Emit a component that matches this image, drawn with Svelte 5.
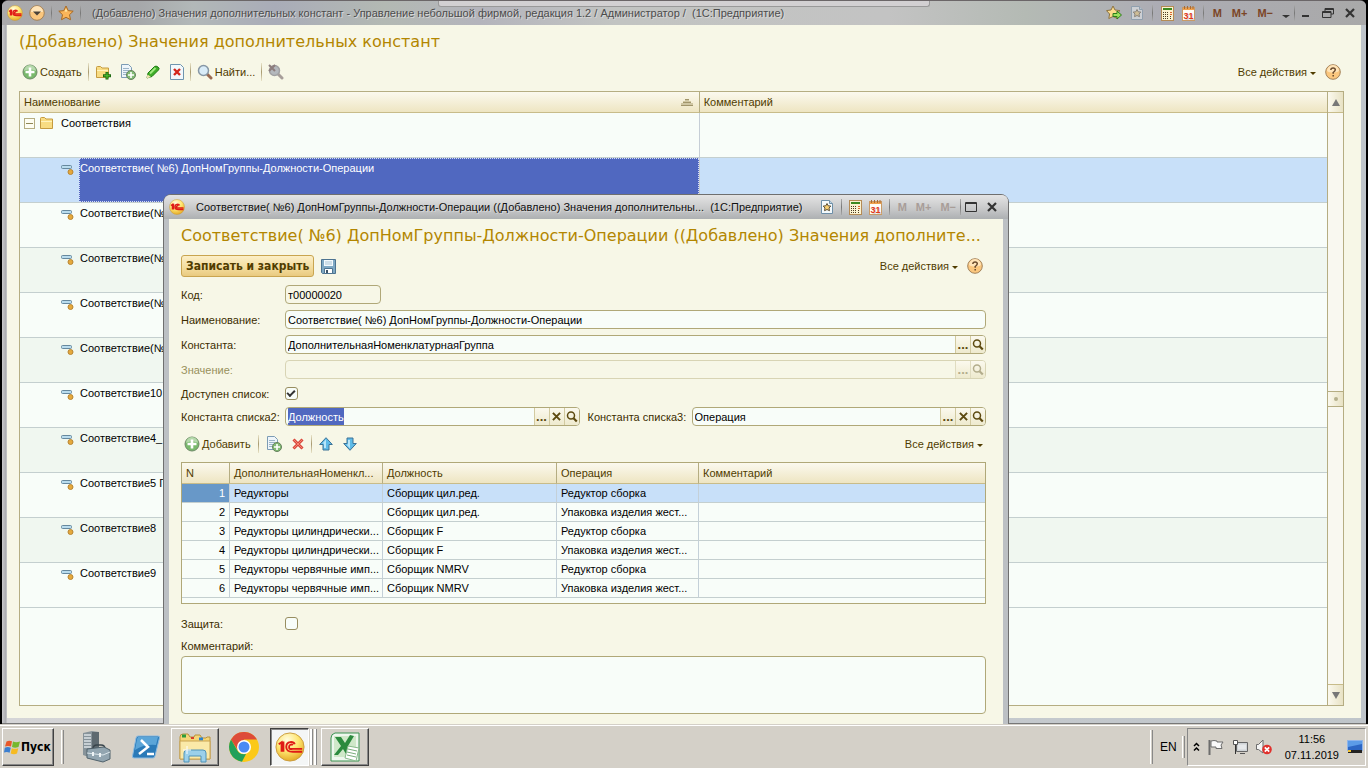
<script lang="ts">
  import { onMount } from "svelte";

  const constants = [
    { name: "Соответствие( №6) ДопНомГруппы-Должности-Операции", selected: true },
    { name: "Соответствие(№" },
    { name: "Соответствие(№" },
    { name: "Соответствие(№" },
    { name: "Соответствие(№" },
    { name: "Соответствие10" },
    { name: "Соответствие4_" },
    { name: "Соответствие5 Г" },
    { name: "Соответствие8" },
    { name: "Соответствие9" },
  ];

  const rows = [
    { group: "Редукторы", post: "Сборщик цил.ред.", op: "Редуктор сборка" },
    { group: "Редукторы", post: "Сборщик цил.ред.", op: "Упаковка изделия жест..." },
    { group: "Редукторы цилиндрически...", post: "Сборщик F", op: "Редуктор сборка" },
    { group: "Редукторы цилиндрически...", post: "Сборщик F", op: "Упаковка изделия жест..." },
    { group: "Редукторы червячные имп...", post: "Сборщик NMRV", op: "Редуктор сборка" },
    { group: "Редукторы червячные имп...", post: "Сборщик NMRV", op: "Упаковка изделия жест..." },
  ];

  let current = $state(0);
  let available = $state(true);
  let locked = $state(false);
  let list2: HTMLInputElement;

  onMount(() => {
    list2.focus();
    list2.select();
  });
</script>

{#snippet logo(size: number)}
  <svg width={size} height={size} viewBox="0 0 32 32">
    <defs>
      <radialGradient id="gold" cx="40%" cy="25%" r="80%">
        <stop offset="0" stop-color="#fffce0" />
        <stop offset="0.5" stop-color="#ffe671" />
        <stop offset="1" stop-color="#e2a51e" />
      </radialGradient>
    </defs>
    <circle cx="16" cy="16" r="15" fill="url(#gold)" stroke="#c99a3c" />
    <g fill="none" stroke="#df1b16" stroke-width={size < 20 ? 3 : 2}>
      <path d="M4 13l3-2v10M7 11h2v10" />
      <path d="M21 13c-1-3-9-4-9 3 0 5 4 5 7 5h10" />
      <path d="M19 14c-1-1-4-1-4 2s2 2 4 2h10" />
    </g>
  </svg>
{/snippet}

{#snippet star(size: number)}
  <svg width={size} height={size} viewBox="0 0 16 16">
    <path d="M8 1l2.200 4.600 5 .6-3.700 3.500 1 5L8 12.300 3.500 14.700l1-5L.8 6.200l5-.6z" fill="#fbb55a" stroke="#a86a24" />
    <path d="M8 3.500l1.300 3H6.700z" fill="#fff0b0" />
  </svg>
{/snippet}

{#snippet starGo()}
  <svg width="16" height="16" viewBox="0 0 16 16">
    <path d="M7 1l2 4 5 .6-3.500 3.400 1 4.500L7 11.500 2.800 13.500l.8-4.500L.5 5.600 5 5z" fill="#fcdc8c" stroke="#8d7441" />
    <path d="M7 8.500h4V6l4.500 4-4.500 4v-2.500H7z" fill="#9be25c" stroke="#2d7b1b" />
  </svg>
{/snippet}

{#snippet starPage(dim: boolean)}
  <svg width="14" height="14" viewBox="0 0 14 14" opacity={dim ? 0.45 : 1}>
    <path d="M1.500.5h8l3 3v10h-11z" fill="#f3f9fc" stroke="#6d8fa8" />
    <path d="M9.500.5v3h3" fill="#c4d7e4" stroke="#6d8fa8" />
    <path d="M7 3.500l1.200 2.300 2.600.3L9 8l.5 2.700L7 9.500l-2.500 1.200L5 8 3.200 6.100l2.600-.3z" fill="#f7cf73" stroke="#5d5038" />
  </svg>
{/snippet}

{#snippet calc()}
  <svg width="13" height="15" viewBox="0 0 13 15">
    <rect x="0.500" y="0.500" width="12" height="14" fill="#fbf2d0" stroke="#b58b55" />
    <path d="M2 3h9" stroke="#3c8a20" stroke-width="2" />
    <path d="M2 6.500h6M2 8.500h6M2 10.500h6M2 12.500h6" stroke="#4a3a20" stroke-dasharray="1 1" />
    <path d="M9 6.500h2M9 8.500h2" stroke="#e0662c" />
    <path d="M9 10.500h2M9 12.500h2" stroke="#4a3a20" stroke-dasharray="1 1" />
  </svg>
{/snippet}

{#snippet calendar()}
  <svg width="13" height="15" viewBox="0 0 13 15">
    <rect x="0.500" y="1.500" width="12" height="13" fill="#fffdf6" stroke="#c99a66" />
    <path d="M1 2h11v2H1z" fill="#f0a14c" />
    <path d="M2.500 0v3M5.500 0v3M8.500 0v3M11 0v3" stroke="#a86a34" />
    <text x="6.500" y="13" text-anchor="middle" font-size="9" font-weight="700" fill="#e2391b">31</text>
  </svg>
{/snippet}

{#snippet plus()}
  <svg width="16" height="16" viewBox="0 0 16 16">
    <circle cx="8" cy="8" r="7" fill="#79b96c" stroke="#6f8a69" />
    <path d="M2 7a6 6 0 0 1 12 0c-3-2-9-2-12 0z" fill="#b5d9ab" />
    <path d="M8 3.500v9M3.500 8h9" stroke="#fff" stroke-width="2.600" />
  </svg>
{/snippet}

{#snippet folder(add: boolean)}
  <svg width="16" height="16" viewBox="0 0 16 16">
    <path d="M1.500 3.500q0-1 1-1h3l1.500 1.500h6.500v9.500h-12z" fill="#f8dc82" stroke="#c59b3f" />
    <path d="M2 6h11v1H2z" fill="#fff3bd" />
    {#if add}
      <path d="M12 8v7.500M8 11.800h8" stroke="#1d6a10" stroke-width="3" />
      <path d="M12 8.700v6M9 11.800h6" stroke="#54c832" />
    {/if}
  </svg>
{/snippet}

{#snippet copy()}
  <svg width="16" height="16" viewBox="0 0 16 16">
    <path d="M1.500.5h7l3 3v10h-10z" fill="#eef5fa" stroke="#7c9cb5" />
    <path d="M3 4.500h6M3 6.500h6M3 8.500h5M3 10.500h4" stroke="#9bb4c8" />
    <circle cx="11" cy="11" r="4.500" fill="#82bb74" stroke="#66805f" />
    <path d="M11 8v6M8 11h6" stroke="#fff" stroke-width="1.600" />
  </svg>
{/snippet}

{#snippet pencil()}
  <svg width="16" height="14" viewBox="0 0 16 14">
    <path d="M2 13l1-5 6.500-6.500q1.500-1 3.500.5t.5 3L7 11.500z" fill="#3fae28" stroke="#1d7a12" />
    <path d="M5 8.500l5.500-5.500" stroke="#a0ea80" stroke-width="2" />
    <path d="M1.500 13.500l1-4L6 12z" fill="#f3e3b5" />
  </svg>
{/snippet}

{#snippet deletePage()}
  <svg width="14" height="16" viewBox="0 0 14 16">
    <path d="M.5.500h10l3 3v12H.5z" fill="#f2f8fc" stroke="#6f94ae" />
    <path d="M4 5l6 6M10 5l-6 6" stroke="#d3261c" stroke-width="2.400" />
  </svg>
{/snippet}

{#snippet glass(off: boolean)}
  <svg width="16" height="16" viewBox="0 0 16 16">
    <path d="M10 10l4 4" stroke={off ? "#a79e9a" : "#9a6a52"} stroke-width="3" stroke-linecap="round" />
    <circle cx="6.500" cy="6.500" r="5" fill={off ? "#b4b8bd" : "#d9ecf8"} stroke={off ? "#a1a1a3" : "#8797a5"} stroke-width="1.500" />
    {#if off}
      <path d="M1 1l6 6M7 1L1 7" stroke="#8d7d7d" stroke-width="2" />
    {/if}
  </svg>
{/snippet}

{#snippet help()}
  <svg width="16" height="16" viewBox="0 0 16 16">
    <circle cx="8" cy="8" r="7.300" fill="#fbc77e" stroke="#a3825a" />
    <path d="M2 7a6 6 0 0 1 12 0c-3 2-9 2-12 0z" fill="#ffe4b8" />
    <path d="M5.800 6q.2-2 2.300-2t2.200 1.800Q10.300 7 8.200 8.500v1.200M8.200 11v1.500" fill="none" stroke="#6a4a2c" stroke-width="1.500" />
  </svg>
{/snippet}

{#snippet lens()}
  <svg width="12" height="12" viewBox="0 0 12 12">
    <circle cx="5" cy="4.500" r="3.500" fill="none" stroke="currentColor" stroke-width="1.500" />
    <path d="M7.500 7.200l3.300 3.300" stroke="currentColor" stroke-width="2.200" />
  </svg>
{/snippet}

{#snippet cross(size: number)}
  <svg width={size} height={size} viewBox="0 0 10 10">
    <path d="M1 1l8 8M9 1L1 9" stroke="currentColor" stroke-width="2.200" />
  </svg>
{/snippet}

{#snippet arrow(flip: boolean)}
  <svg class:flip width="14" height="14" viewBox="0 0 14 14">
    <path d="M7 .7l6.300 6.800H10V13H4V7.500H.7z" fill="#5ebbe8" stroke="#3c7296" />
    <path d="M7 2.500L3.500 6.500H5V11h2z" fill="#b9e6fa" />
  </svg>
{/snippet}

{#snippet item()}
  <svg width="14" height="12" viewBox="0 0 14 12">
    <rect x="0.500" y="1.500" width="10" height="3" rx="1" fill="#b9dcee" stroke="#66889e" />
    <circle cx="9.500" cy="8" r="2.500" fill="#e5a93c" stroke="#b98634" />
  </svg>
{/snippet}

{#snippet allActions()}
  <button class="flat">Все действия<i class="caret"></i></button>
{/snippet}

{#snippet memory(dim: boolean)}
  <button class="mem" class:dim>M</button>
  <button class="mem" class:dim>M+</button>
  <button class="mem" class:dim>M−</button>
{/snippet}

<div class="desktop">
  <main class="window">
    <header class="titlebar">
      <i class="remote"></i>
      {@render logo(16)}
      <svg class="menu" width="16" height="16" viewBox="0 0 16 16">
        <circle cx="8" cy="8" r="7.300" fill="#fbc77e" stroke="#a3825a" />
        <path d="M2 7a6 6 0 0 1 12 0z" fill="#ffe4b8" />
        <path d="M4 6.500h8L8 10.500z" fill="#4a4238" />
      </svg>
      <i class="sep"></i>
      {@render star(16)}
      <i class="sep"></i>
      <span class="caption">(Добавлено) Значения дополнительных констант - Управление небольшой фирмой, редакция 1.2 / Администратор /&nbsp; (1С:Предприятие)</span>
      <div class="tools">
        {@render starGo()}
        {@render starPage(true)}
        <i class="sep"></i>
        {@render calc()}
        {@render calendar()}
        <i class="sep"></i>
        {@render memory(false)}
        <svg width="8" height="16" viewBox="0 0 8 16"><path d="M0 10h8l-4 3z" fill="#333" /></svg>
        <i class="sep tight"></i>
        <button class="sys" aria-label="Свернуть"><svg width="12" height="12" viewBox="0 0 12 12"><path d="M2 9h7" stroke="#333" stroke-width="2" /></svg></button>
        <button class="sys" aria-label="Восстановить"><svg width="12" height="12" viewBox="0 0 12 12"><path d="M3 4V1.500h8.500V7H9M.5 4.500H9v6H.5zM.5 5.500H9M3 2.500h8" fill="none" stroke="#333" /></svg></button>
        <button class="sys" aria-label="Закрыть">{@render cross(10)}</button>
      </div>
    </header>

    <div class="body">
      <h1>(Добавлено) Значения дополнительных констант</h1>
      <div class="toolbar">
        <button class="flat">{@render plus()}Создать</button>
        <i class="split"></i>
        <button class="flat" aria-label="Создать группу">{@render folder(true)}</button>
        <button class="flat" aria-label="Скопировать">{@render copy()}</button>
        <button class="flat" aria-label="Изменить">{@render pencil()}</button>
        <button class="flat" aria-label="Пометить на удаление">{@render deletePage()}</button>
        <i class="split"></i>
        <button class="flat">{@render glass(false)}Найти...</button>
        <i class="split"></i>
        <button class="flat" aria-label="Отменить поиск">{@render glass(true)}</button>
        <div class="right">
          {@render allActions()}
          <button class="flat" aria-label="Справка">{@render help()}</button>
        </div>
      </div>

      <div class="list">
        <table class="tree">
          <colgroup><col class="wide" /><col /></colgroup>
          <thead>
            <tr>
              <th>
                <div class="sorted">
                  Наименование
                  <svg width="12" height="8" viewBox="0 0 12 8"><path d="M4 1h4v2h2v2h2v3H0V5h2V3h2z" fill="#cfc6a2" /><path d="M4 1.500h4M2 4.500h8M0 7.500h12" stroke="#a1956a" /></svg>
                </div>
              </th>
              <th>Комментарий</th>
            </tr>
          </thead>
          <tbody>
            <tr>
              <td>
                <div class="node root">
                  <svg width="11" height="11" viewBox="0 0 11 11"><rect x="0.500" y="0.500" width="10" height="10" fill="#fdfdf2" stroke="#b5ad82" /><path d="M2 5.500h7" stroke="#8f8757" /></svg>
                  {@render folder(false)}
                  <span>Соответствия</span>
                </div>
              </td>
              <td></td>
            </tr>
            {#each constants as c, i (i)}
              <tr class:selected={c.selected}>
                <td>
                  <div class="node">
                    <span class="mark">{@render item()}</span>
                    <span class="name">{c.name}</span>
                  </div>
                </td>
                <td></td>
              </tr>
            {/each}
          </tbody>
        </table>
        <div class="scroll">
          <i class="btn up"></i>
          <i class="thumb"></i>
          <i class="btn down"></i>
        </div>
      </div>
    </div>
  </main>

  <section class="dialog">
    <header class="titlebar light">
      {@render logo(16)}
      <span class="caption">Соответствие( №6) ДопНомГруппы-Должности-Операции ((Добавлено) Значения дополнительны...&nbsp; (1С:Предприятие)</span>
      <div class="tools">
        {@render starPage(false)}
        <i class="sep"></i>
        {@render calc()}
        {@render calendar()}
        <i class="sep"></i>
        {@render memory(true)}
        <i class="sep tight"></i>
        <button class="sys" aria-label="Развернуть"><svg width="12" height="12" viewBox="0 0 12 12"><path d="M.5 1.500h11v9H.5zM.5 2.500h11" fill="none" stroke="#333" /></svg></button>
        <button class="sys" aria-label="Закрыть">{@render cross(10)}</button>
      </div>
    </header>

    <form class="form" onsubmit={(e) => e.preventDefault()}>
      <h1>Соответствие( №6) ДопНомГруппы-Должности-Операции ((Добавлено) Значения дополните...</h1>
      <div class="commands">
        <button class="primary">Записать и закрыть</button>
        <button class="flat" aria-label="Записать">
          <svg width="15" height="15" viewBox="0 0 15 15">
            <path d="M.5.500h14v14h-13l-1-1z" fill="#7fa9c4" stroke="#4d7390" />
            <path d="M3 1h9v6H3z" fill="#f4fafd" />
            <path d="M4 3h7M4 5h7" stroke="#a9c4d4" />
            <path d="M3.500 9.500h8v5h-8z" fill="#fff" stroke="#4d7390" />
            <path d="M5 11h2v3H5z" fill="#3d5568" />
          </svg>
        </button>
        <div class="right">
          {@render allActions()}
          <button class="flat" aria-label="Справка">{@render help()}</button>
        </div>
      </div>

      <div class="row">
        <label for="code">Код:</label>
        <div class="field short"><input id="code" value="т00000020" readonly /></div>
      </div>
      <div class="row">
        <label for="name">Наименование:</label>
        <div class="field"><input id="name" value="Соответствие( №6) ДопНомГруппы-Должности-Операции" /></div>
      </div>
      <div class="row">
        <label for="const">Константа:</label>
        <div class="field">
          <input id="const" value="ДополнительнаяНоменклатурнаяГруппа" />
          <button class="pick">...</button>
          <button class="pick" aria-label="Открыть">{@render lens()}</button>
        </div>
      </div>
      <div class="row off">
        <label for="value">Значение:</label>
        <div class="field">
          <input id="value" disabled />
          <button class="pick" disabled>...</button>
          <button class="pick" disabled aria-label="Открыть">{@render lens()}</button>
        </div>
      </div>
      <div class="row low">
        <label for="avail">Доступен список:</label>
        <input type="checkbox" id="avail" bind:checked={available} />
      </div>
      <div class="row low">
        <label for="list2">Константа списка2:</label>
        <div class="field">
          <input id="list2" value="Должность" bind:this={list2} />
          <button class="pick">...</button>
          <button class="pick" aria-label="Очистить">{@render cross(9)}</button>
          <button class="pick" aria-label="Открыть">{@render lens()}</button>
        </div>
        <label class="second" for="list3">Константа списка3:</label>
        <div class="field">
          <input id="list3" value="Операция" />
          <button class="pick">...</button>
          <button class="pick" aria-label="Очистить">{@render cross(9)}</button>
          <button class="pick" aria-label="Открыть">{@render lens()}</button>
        </div>
      </div>

      <div class="toolbar inner">
        <button class="flat">{@render plus()}Добавить</button>
        <i class="split"></i>
        <button class="flat" aria-label="Скопировать">{@render copy()}</button>
        <button class="flat" aria-label="Удалить">
          <svg width="12" height="12" viewBox="0 0 12 12">
            <path d="M1.500 1.500l9 9M10.500 1.500l-9 9" stroke="#d8473c" stroke-width="3" />
            <path d="M1.500 1.500l9 9M10.500 1.500l-9 9" stroke="#f5836f" />
          </svg>
        </button>
        <i class="split"></i>
        <button class="flat" aria-label="Вверх">{@render arrow(false)}</button>
        <button class="flat" aria-label="Вниз">{@render arrow(true)}</button>
        <div class="right">{@render allActions()}</div>
      </div>

      <div class="grid">
        <table>
          <colgroup><col class="n" /><col class="group" /><col class="post" /><col class="op" /><col /></colgroup>
          <thead>
            <tr><th>N</th><th>ДополнительнаяНоменкл...</th><th>Должность</th><th>Операция</th><th>Комментарий</th></tr>
          </thead>
          <tbody>
            {#each rows as r, i (i)}
              <tr class:current={current === i} onclick={() => (current = i)}>
                <td>{i + 1}</td>
                <td>{r.group}</td>
                <td>{r.post}</td>
                <td>{r.op}</td>
                <td></td>
              </tr>
            {/each}
          </tbody>
        </table>
      </div>

      <div class="row">
        <label for="locked">Защита:</label>
        <input type="checkbox" id="locked" bind:checked={locked} />
      </div>
      <label class="above" for="comment">Комментарий:</label>
      <textarea id="comment"></textarea>
    </form>
  </section>
</div>

<footer class="taskbar">
  <button class="task start">
    <svg width="17" height="16" viewBox="0 0 17 16">
      <path d="M2.500 2.500Q5 1 8 2.200L7 7.500Q4 6.300 1 7.500z" fill="#e8582a" />
      <path d="M9 2.500q3 1.500 7 0L14.500 8q-3.500 1.500-6.500 0z" fill="#76b82e" />
      <path d="M.8 8.700q3-1.300 6 0l-1.200 5Q3 12.500 0 13.500z" fill="#3c7fd0" />
      <path d="M7.800 9.200q3 1.300 6.500 0L13 14.500q-3 1.300-6.300 0z" fill="#f6bb22" />
    </svg>
    Пуск
  </button>
  <i class="grip"></i>
  <button class="quick" aria-label="Диспетчер сервера">
    <svg width="30" height="32" viewBox="0 0 30 32">
      <path d="M2 2l9-2 7 1v24l-8 2-8-3z" fill="#87939a" />
      <path d="M11 1l7 0v24l-7 2z" fill="#5d6970" />
      <path d="M3 4h7M3 7h7M3 10h7M3 13h7M3 16h7" stroke="#dde4e8" stroke-width="1.500" />
      <path d="M12 18q0-4 4-4h4q4 0 4 4" fill="none" stroke="#39444b" stroke-width="1.500" />
      <path d="M6 18l17-2 6 3v9l-7 3-16-4z" fill="#92a5b0" stroke="#51626c" />
      <path d="M6 22l16 2 7-3" fill="none" stroke="#dbe5ea" />
      <path d="M12 21v4M19 22v4" stroke="#eef3f5" stroke-width="2" />
    </svg>
  </button>
  <button class="quick" aria-label="PowerShell">
    <svg width="28" height="24" viewBox="0 0 28 24">
      <path d="M6 1h20q2 0 1.500 2L23 21q-.5 2-2 2H2q-2 0-1.500-2L4 3q.5-2 2-2z" fill="#2a7ab8" stroke="#8dbbe0" />
      <path d="M6 2h20l-2 8Q12 9 3 15L5 4z" fill="#5ba5d8" />
      <path d="M9 5l7 7-9 7M15 19h7" fill="none" stroke="#fff" stroke-width="2.500" />
    </svg>
  </button>
  <button class="task" aria-label="Проводник">
    <svg width="34" height="32" viewBox="0 0 34 32">
      <path d="M2 6q0-3 3-3h5l2 3h4l1-2h5l2 3h4l1-1h3v22H2z" fill="#f4d678" stroke="#b8923c" />
      <path d="M4 5h4" stroke="#2a9c3c" stroke-width="3" />
      <path d="M13 7h3" stroke="#d8402c" stroke-width="2" />
      <path d="M21 8h4" stroke="#2b82d0" stroke-width="3" />
      <path d="M2 10h30v18H2z" fill="#fae9a8" stroke="#c9a453" />
      <path d="M6 31V22q0-3 3-3h16q3 0 3 3v9h-5v-6H11v6z" fill="#9bd0ea" stroke="#4f93b8" />
      <path d="M9 15v8M5 19h8" stroke="#fff" />
    </svg>
  </button>
  <button class="quick" aria-label="Chrome">
    <svg width="30" height="30" viewBox="0 0 30 30">
      <circle cx="15" cy="15" r="15" fill="#fbc918" />
      <path d="M2 7.500A15 15 0 0 1 28 7.500H15L9 18.500z" fill="#dd4b39" />
      <path d="M2 7.500l6.500 11.200q2 3.500 6.500 3.500l2-.3L13 29.800A15 15 0 0 1 2 7.500z" fill="#22a05a" />
      <circle cx="15" cy="15" r="7" fill="#fff" />
      <circle cx="15" cy="15" r="5.500" fill="#4a8af4" />
    </svg>
  </button>
  <button class="task active" aria-label="1С:Предприятие">{@render logo(30)}</button>
  <i class="stack"></i>
  <i class="stack"></i>
  <button class="task excel" aria-label="Excel">
    <svg width="30" height="30" viewBox="0 0 30 30">
      <path d="M5 1h24v28H1V6q0-4 4-5z" fill="#eef7ee" stroke="#3d9453" />
      <path d="M4 4h22v21H4z" fill="#cfe8c9" />
      <path d="M5 5h6l4 6 5-8 4 1-6 10 4 8h-6l-3-5-5 6H4l7-9z" fill="#2b8a3e" />
      <path d="M18 14l11 2-3 13-11-3z" fill="#fff" stroke="#87b98a" />
      <path d="M18 17l9 2M17 20l9 2M17 23l9 2" stroke="#79ad7c" />
    </svg>
  </button>
  <div class="tray">
    <i class="grip"></i>
    <span class="lang">EN</span>
    <i class="grip short"></i>
    <div class="sunken">
      <svg width="7" height="10" viewBox="0 0 7 10"><path d="M1 4l2.500-2.500L6 4M1 8.500L3.500 6 6 8.500" fill="none" stroke="#000" stroke-width="1.500" /></svg>
      <svg width="16" height="16" viewBox="0 0 16 16"><path d="M1.500 1v15" stroke="#6d6d6d" stroke-width="2" /><path d="M3 2q3-1 6 0v1h6l-2 3 1 3.500H8V8H3z" fill="#fafafa" stroke="#6d6d6d" /></svg>
      <svg width="16" height="16" viewBox="0 0 16 16"><path d="M4.500 3.500h11v9h-11z" fill="#cfd3d6" stroke="#666" /><path d="M6 5.500h8v5H6z" fill="#e6e8ea" /><path d="M8 14.500h5" stroke="#555" /><path d="M3.500 5v10" stroke="#333" /><path d="M1.500 1.500h4v4h-4z" fill="#fff" stroke="#555" /></svg>
      <svg width="16" height="16" viewBox="0 0 16 16"><path d="M.5 5.500h2L7 1v13L2.500 10.500h-2z" fill="#f4f4f4" stroke="#6d6d6d" /><circle cx="11" cy="10.500" r="4.800" fill="#e0302c" /><path d="M8.800 8.300l4.400 4.400M13.200 8.300l-4.400 4.400" stroke="#fff" stroke-width="1.700" /></svg>
      <div class="clock"><span>11:56</span><span>07.11.2019</span></div>
      <svg width="16" height="14" viewBox="0 0 16 14"><path d="M.5.500h15v10H.5z" fill="#2c66c4" stroke="#8fb4ea" /><path d="M1 1h14v3L1 7z" fill="#5b9be8" /><path d="M1 10h14v3H1z" fill="#222" /><path d="M1 11h3" stroke="#f0c030" stroke-width="2" /></svg>
    </div>
  </div>
</footer>

<style>
  :global(body) {
    background: #000;
  }
  :global(#app) {
    display: flex;
    flex-direction: column;
    height: 100vh;
    font: 11px/20px "Liberation Sans", Arial, sans-serif;
    color: #000;
  }
  .desktop {
    position: relative;
    flex: 1;
    min-height: 0;
    display: flex;
    overflow: hidden;
  }
  svg {
    display: block;
    flex: none;
  }
  .flip {
    transform: scaleY(-1);
  }
  button,
  input,
  textarea {
    font: inherit;
    color: inherit;
    margin: 0;
    padding: 0;
    border: 0;
    background: none;
    outline: none;
  }
  h1 {
    margin: 0;
    font: 16px/33px "DejaVu Sans", Verdana, sans-serif;
    color: #b38600;
    white-space: nowrap;
  }

  /* windows */
  .window {
    flex: 1;
    display: flex;
    flex-direction: column;
    min-width: 0;
    margin: 0 2px;
    border-top: 1px solid #6b6668;
    background: linear-gradient(90deg, #c9c9cb, #a9aaae 4px, #d5d5d7 5px, #bfc5ca);
    border-radius: 6px 6px 0 0;
    border-bottom: 1px solid #777;
  }
  .titlebar {
    position: relative;
    display: flex;
    align-items: center;
    gap: 6px;
    height: 24px;
    padding: 0 9px 0 5px;
    background: linear-gradient(90deg, #aaa9ab, #a6a8aa 10%, #b2b8b8 14%, #a9acb8 20%, #b3b9b3 28%, #b4b4bc 35%, #c2c4c2 45%, #c3c3c3 65%, #b4bab4 75%, #acacb4 85%, #a9a9a9);
    border-radius: 6px 6px 0 0;
    color: #4c4c4c;
    text-shadow: 1px 1px 0 #d8d8d8;
  }
  .titlebar.light {
    background: linear-gradient(#e4e4e4, #c6c7c8 60%, #adb0b2);
    color: #111;
  }
  .remote {
    position: absolute;
    left: 32%;
    right: 32%;
    top: 0;
    height: 5px;
    background: #d2d0d2;
    border: 1px solid #999;
    border-top: 0;
    border-radius: 0 0 3px 3px;
  }
  .caption {
    flex: 1;
    min-width: 0;
    margin-left: 5px;
    white-space: nowrap;
  }
  .tools {
    display: flex;
    align-items: center;
    gap: 8px;
  }
  .sep {
    width: 1px;
    height: 16px;
    background: linear-gradient(#aaa, #777, #aaa);
  }
  .sep.tight {
    margin: 0 -4px;
  }
  .mem {
    padding: 0 1px;
    font-weight: 700;
    color: #7b4526;
  }
  .mem.dim {
    color: #a89d98;
  }
  .light .tools {
    gap: 7px;
  }
  .sys {
    display: grid;
    place-items: center;
    width: 14px;
    height: 16px;
    color: #333;
  }
  .body {
    flex: 1;
    min-height: 0;
    display: flex;
    flex-direction: column;
    margin: 0 5px 5px;
    padding: 0 17px 12px 12px;
    background: #f7f7e7;
  }

  /* command bars */
  .toolbar,
  .commands {
    display: flex;
    align-items: center;
    height: 28px;
    gap: 9px;
    color: #503c00;
  }
  .toolbar {
    padding-left: 3px;
  }
  .flat {
    display: flex;
    align-items: center;
    gap: 2px;
    white-space: nowrap;
  }
  .caret {
    margin: 2px 0 0 1px;
    border: 3px solid transparent;
    border-top-color: #503c00;
    border-bottom: 0;
  }
  .split {
    width: 1px;
    height: 18px;
    margin: 0 -3px;
    background: linear-gradient(#e8e3c8, #a89a70, #e8e3c8);
  }
  .right {
    display: flex;
    align-items: center;
    gap: 9px;
    margin-left: auto;
    padding-right: 3px;
  }

  /* tables */
  table {
    width: 100%;
    border-collapse: separate;
    border-spacing: 0;
    table-layout: fixed;
  }
  th {
    height: 21px;
    padding: 0 4px;
    text-align: left;
    font-weight: 400;
    color: #503c00;
    background: linear-gradient(#fbf9ee, #eee5c2);
    border-right: 1px solid #b5ad82;
    border-bottom: 1px solid #c8bc8a;
    white-space: nowrap;
  }
  th,
  td {
    box-sizing: border-box;
  }
  .list {
    flex: 1;
    min-height: 0;
    display: flex;
    margin-top: 5px;
    border: 1px solid #b5ad82;
    background: #f8fdf9;
    overflow: hidden;
  }
  .tree {
    flex: 1;
    align-self: flex-start;
  }
  .tree .wide {
    width: 52%;
  }
  .tree th:last-child,
  .tree td:last-child,
  .grid th:last-child,
  .grid td:last-child {
    border-right: 0;
  }
  .tree td {
    height: 45px;
    padding: 0;
    vertical-align: top;
    border-right: 1px solid #c6ced6;
    border-bottom: 1px solid #c4cfcf;
  }
  .tree tbody tr:nth-child(even) {
    background: #f0f7f0;
  }
  .tree tbody tr.selected {
    background: #c8e0f9;
  }
  .sorted {
    display: flex;
    align-items: center;
    justify-content: space-between;
    padding-right: 2px;
  }
  .node {
    display: flex;
    height: 44px;
  }
  .node.root {
    height: 20px;
    align-items: center;
    gap: 4px;
    padding-left: 4px;
  }
  .node.root span {
    margin-left: 2px;
  }
  .mark {
    flex: none;
    width: 59px;
    box-sizing: border-box;
    padding: 6px 0 0 41px;
  }
  .name {
    flex: 1;
    padding-left: 1px;
    white-space: nowrap;
  }
  .selected .name {
    box-sizing: border-box;
    padding-left: 0;
    line-height: 18px;
    color: #fff;
    background: #5068c0;
    border: 1px dotted #d4dcf8;
  }

  .scroll {
    display: flex;
    flex-direction: column;
    justify-content: space-between;
    align-items: center;
    width: 15px;
    border-left: 1px solid #b5ad82;
    background: #f9f8f0;
  }
  .btn,
  .thumb {
    display: grid;
    place-items: center;
    box-sizing: border-box;
    width: 100%;
    height: 21px;
    background: linear-gradient(90deg, #fbf9ee, #e8e2c4);
  }
  .btn::after {
    content: "";
    border: 4px solid transparent;
  }
  .up {
    border-bottom: 1px solid #c8bc8a;
  }
  .up::after {
    border-bottom: 7px solid #777;
    border-top: 0;
  }
  .down {
    border-top: 1px solid #c8bc8a;
  }
  .down::after {
    border-top: 7px solid #777;
    border-bottom: 0;
  }
  .thumb {
    height: 16px;
    border: solid #b5ad82;
    border-width: 1px 0;
  }
  .thumb::after {
    content: "";
    width: 4px;
    height: 4px;
    border-radius: 50%;
    background: #b5b08c;
  }

  /* item dialog */
  .dialog {
    position: absolute;
    left: 163px;
    top: 194px;
    width: 844px;
    border: 1px solid #6f6f6f;
    border-radius: 8px 8px 0 0;
    background: #bcc0c4;
  }
  .form {
    margin: 0 5px;
    padding: 0 17px 20px 12px;
    background: #f7f7e7;
    color: #3c2d00;
  }
  .commands {
    gap: 7px;
    margin-bottom: 2px;
  }
  .primary {
    height: 22px;
    padding: 0 4px;
    font: 700 12px/20px "DejaVu Sans Condensed", Verdana, sans-serif;
    color: #503c00;
    border: 1px solid #c9a550;
    border-radius: 3px;
    background: linear-gradient(#fcefc8, #f3dc9c 60%, #e9ca80);
  }
  .row {
    display: flex;
    align-items: center;
    height: 25px;
  }
  .row.low {
    height: 23px;
  }
  .row label {
    flex: none;
    width: 104px;
    white-space: nowrap;
  }
  .row .second {
    margin-left: 8px;
  }
  .field {
    flex: 1;
    display: flex;
    box-sizing: border-box;
    min-width: 0;
    height: 19px;
    border: 1px solid #b0a878;
    border-radius: 4px;
    background: #f8fdf9;
    overflow: hidden;
    color: #000;
  }
  .field.short {
    flex: 0 0 96px;
    background: #f7f7e7;
  }
  .field input {
    flex: 1;
    min-width: 0;
    padding: 0 2px;
  }
  .field input::selection {
    background: #5068c0;
    color: #fff;
  }
  .off {
    color: #98905c;
  }
  .off .field {
    border-color: #d8d4b4;
    background: #f7f7e7;
  }
  .pick {
    display: grid;
    place-items: center;
    width: 15px;
    border-left: 1px solid #d2caa0;
    background: linear-gradient(#fbf9ee, #eeeace);
    color: #5d4a10;
    font-size: 13px;
    font-weight: 700;
    line-height: 16px;
  }
  .off .pick {
    color: #b3ad8c;
    border-color: #e0dcc0;
  }
  input[type="checkbox"] {
    appearance: none;
    box-sizing: border-box;
    width: 13px;
    height: 13px;
    border: 1px solid #988e60;
    border-radius: 3px;
    background: #f8fdf9;
  }
  input[type="checkbox"]:checked::before {
    content: "";
    display: block;
    width: 6px;
    height: 3px;
    margin: 2px 1px;
    border: solid #333;
    border-width: 0 0 2px 2px;
    transform: rotate(-45deg);
  }
  .toolbar.inner {
    height: 32px;
    gap: 10px;
  }
  .grid {
    height: 140px;
    margin: 2px 0 7px;
    border: 1px solid #b0a878;
    background: #f8fdf9;
    color: #000;
  }
  .grid .n {
    width: 48px;
  }
  .grid .group {
    width: 153px;
  }
  .grid .post {
    width: 174px;
  }
  .grid .op {
    width: 142px;
  }
  .grid td {
    height: 19px;
    padding: 0 2px 0 4px;
    line-height: 18px;
    border-right: 1px solid #c4d0d8;
    border-bottom: 1px solid #c4cfcf;
    white-space: nowrap;
  }
  .grid td:first-child {
    padding-right: 4px;
    text-align: right;
  }
  .grid .current {
    background: #c8e0f9;
  }
  .grid .current td:first-child {
    background: #6898c8;
    color: #fff;
  }
  .above {
    display: block;
  }
  textarea {
    display: block;
    box-sizing: border-box;
    width: 100%;
    height: 58px;
    border: 1px solid #b0a878;
    border-radius: 4px;
    background: #f8fdf9;
    resize: none;
  }

  /* taskbar */
  .taskbar {
    display: flex;
    align-items: center;
    box-sizing: border-box;
    height: 44px;
    padding: 2px 2px 1px;
    border-top: 1px solid #d4d0c8;
    background: #d4d0c8;
    box-shadow: inset 0 1px 0 #fff;
  }
  .task,
  .quick {
    display: grid;
    place-items: center;
    box-sizing: border-box;
    width: 48px;
    height: 38px;
  }
  .quick {
    width: 50px;
  }
  .task {
    border: 1px solid #fff;
    border-right-color: #404040;
    border-bottom-color: #404040;
    box-shadow: inset -1px -1px 0 #888;
  }
  .start {
    display: flex;
    align-items: center;
    gap: 0;
    width: 52px;
    padding-left: 1px;
    font: 700 12px/20px "DejaVu Sans Condensed", Tahoma, sans-serif;
  }
  .grip {
    width: 1px;
    height: 34px;
    margin: 0 7px;
    border-left: 1px solid #fff;
    border-right: 1px solid #888;
  }
  .active {
    width: 39px;
    margin-left: 1px;
    background: #f4f6f6;
    border-color: #404040 #fff #fff #404040;
    box-shadow: inset 1px 1px 0 #888;
  }
  .stack {
    width: 2px;
    height: 36px;
    margin-left: 1px;
    border-right: 1px solid #888;
    background: #fff;
  }
  .excel {
    margin-left: 4px;
  }
  .tray {
    display: flex;
    align-items: center;
    margin-left: auto;
  }
  .tray .grip {
    margin: 0 7px 0 0;
  }
  .tray .short {
    height: 22px;
    margin: 0 2px 0 5px;
  }
  .lang {
    font-size: 12px;
  }
  .sunken {
    display: flex;
    align-items: center;
    gap: 8px;
    box-sizing: border-box;
    height: 38px;
    padding: 0 2px 0 5px;
    border: 1px solid #888;
    border-right-color: #fff;
    border-bottom-color: #fff;
  }
  .clock {
    display: flex;
    flex-direction: column;
    align-items: center;
    margin-left: 5px;
    line-height: 16px;
  }
</style>
